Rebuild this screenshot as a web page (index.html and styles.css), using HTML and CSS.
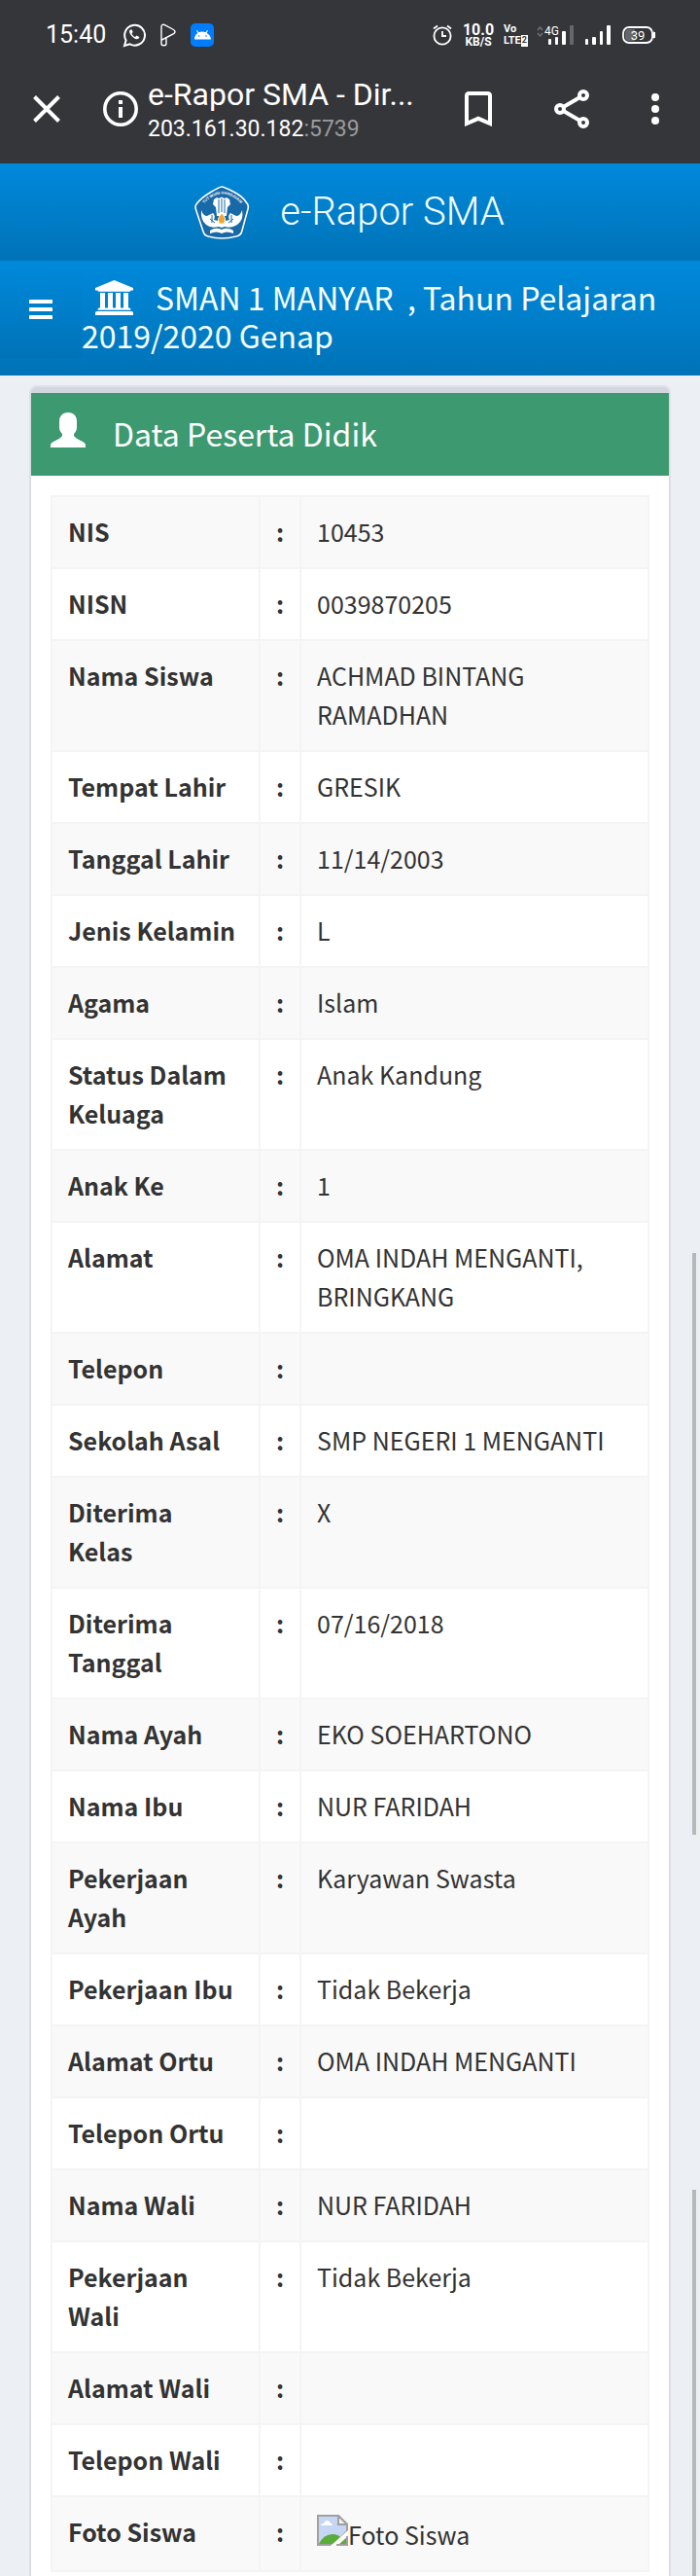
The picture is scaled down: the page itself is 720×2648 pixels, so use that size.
FILE: index.html
```html
<!DOCTYPE html>
<html lang="id">
<head>
<meta charset="utf-8">
<meta name="viewport" content="width=device-width, initial-scale=1">
<title>e-Rapor SMA - Direktorat Pembinaan SMA</title>
<link rel="stylesheet" href="styles.css">
</head>
<body>
<div class="browser">
  <div class="status">
    <span class="clock">15:40</span>
    <svg class="ic-wa" width="24" height="26" viewBox="0 0 24 26" fill="none" stroke="#fff" stroke-width="2"><path d="M2 24l1.6-5.6A10.4 10.4 0 1 1 7.600 22.300z"/><path d="M8 7.500c-1.500 1-1.200 3.200.8 5.700s4.600 4.400 6.600 3.900c1.300-.4 2-1.400 1.800-2.200l-2.600-1.300-1.500 1.400c-1.800-.8-3-2.200-3.600-3.600l1.200-1.500-1-2.500z" fill="#fff" stroke="none"/></svg>
    <svg class="ic-play" width="18" height="24" viewBox="0 0 18 24" fill="none" stroke="#fff" stroke-width="1.400"><path d="M2 17V3.500C2 1.500 3.500.8 5 1.500l9.500 5c2 1.200 2 3 .2 4.200L2 17.300V21c0 1 1 1.800 2.500 1.800S7 22 7 21v-6"/></svg>
    <svg class="ic-droid" width="24" height="24" viewBox="0 0 24 24"><rect width="24" height="24" rx="5" fill="#007dff"/><path d="M4 16.500a8 8 0 0 1 3.400-6.600L6 7.400l.8-.5 1.600 2.400a9 9 0 0 1 7.200 0l1.600-2.400.8.500-1.400 2.500a8 8 0 0 1 4.400 6.600z" fill="#fff"/><circle cx="8.600" cy="13" r=".8" fill="#007dff"/><circle cx="16" cy="13" r=".8" fill="#007dff"/></svg>
    <span class="spacer"></span>
    <svg class="ic-alarm" width="20" height="22" viewBox="0 0 20 22" fill="none" stroke="#fff" stroke-width="1.800"><circle cx="10" cy="12" r="8.600"/><path d="M10 7v5h4M1 4.500l4-3M19 4.500l-4-3"/></svg>
    <span class="speed"><b class="speed-value">10.0</b><b class="speed-unit">KB/S</b></span>
    <span class="volte"><b>Vo</b><b>LTE<i class="sim">2</i></b></span>
    <span class="signal4g"><svg width="38" height="22" viewBox="0 0 38 22"><path d="M1 6l2.500-3L6 6M1 9l2.500 3L6 9" fill="none" stroke="#77787b" stroke-width="1.200"/><g fill="#fff"><rect x="12" y="15" width="3" height="6" rx="1"/><rect x="19" y="13" width="3" height="8" rx="1"/><rect x="26" y="7" width="4" height="14" rx="1"/></g><rect x="34" y="1" width="4" height="20" rx="1" fill="#66676a"/><text x="8" y="11" class="g4">4G</text></svg></span>
    <svg class="ic-signal" width="26" height="22" viewBox="0 0 26 22" fill="#fff"><rect x="0" y="15" width="3" height="6" rx="1"/><rect x="7" y="13" width="4" height="8" rx="1"/><rect x="15" y="7" width="3" height="14" rx="1"/><rect x="22" y="1" width="4" height="20" rx="1"/></svg>
    <svg class="ic-battery" width="34" height="20" viewBox="0 0 34 20"><rect x="1" y="2" width="30" height="16" rx="6" fill="none" stroke="#fff" stroke-width="1.800"/><path d="M7 4h6v12H7a4 4 0 0 1-4-4V8a4 4 0 0 1 4-4z" fill="#66676a"/><path d="M32 7a3 3 0 0 1 0 6z" fill="#fff" stroke="#fff"/><text x="16" y="15" text-anchor="middle" class="pct">39</text></svg>
  </div>
  <div class="toolbar">
    <button class="tool" aria-label="Tutup"><svg width="28" height="28" viewBox="0 0 28 28" stroke="#fff" stroke-width="4"><path d="M1.500 1.500l25 25M26.500 1.500l-25 25"/></svg></button>
    <button class="tool info" aria-label="Info situs"><svg width="36" height="36" viewBox="0 0 36 36"><circle cx="18" cy="18" r="16.200" fill="none" stroke="#fff" stroke-width="3.600"/><path d="M16 9h4v4h-4zM16 16h4v11h-4z" fill="#fff"/></svg></button>
    <div class="address"><div class="page-title">e-Rapor SMA - Dir...</div><div class="url">203.161.30.182<span class="port">:5739</span></div></div>
    <button class="tool" aria-label="Markah"><svg width="28" height="36" viewBox="0 0 28 36" fill="none" stroke="#fff" stroke-width="4"><path d="M2 33V4.500Q2 2 4.500 2h19Q26 2 26 4.500V33l-12-5.200z"/></svg></button>
    <button class="tool share" aria-label="Bagikan"><svg width="36" height="40" viewBox="0 0 36 40" fill="none" stroke="#fff" stroke-width="4"><path d="M6 20L30 6M6 20l24 14"/><g fill="#35363a"><circle cx="6" cy="20" r="4"/><circle cx="30" cy="6" r="4"/><circle cx="30" cy="34" r="4"/></g></svg></button>
    <button class="tool more" aria-label="Menu"><svg width="8" height="32" viewBox="0 0 8 32" fill="#fff"><circle cx="4" cy="4" r="4"/><circle cx="4" cy="16" r="4"/><circle cx="4" cy="28" r="4"/></svg></button>
  </div>
</div>
<header>
  <a class="brand" href="#">
    <svg width="60" height="60" viewBox="0 -2 60 60"><path d="M30 3Q32 3 42 9T57 20Q59 22 58 27L52 48Q51 53 46 54Q30 58 15 54Q11 53 10 49L3 28Q1 23 3 21Q7 16 17 10T30 3z" fill="#0b4f86" opacity=".5"/><path d="M30 2Q32 2 42 7T56 19Q58 21 57 25L51 47Q50 52 45 53Q30 57 16 53Q12 52 11 48L4 27Q2 22 4 20Q8 14 18 8T30 2z" fill="#1769a8" stroke="#fff" stroke-width="1.600"/><path id="arc" d="M8 24Q30-5 54 24" fill="none"/><text class="motto"><textPath href="#arc" startOffset="50%" text-anchor="middle">TUT WURI HANDAYANI</textPath></text><g fill="#fff"><path d="M22 15l3-2 2 1 3-1.500 3 1.500 2-1 3 2 1 5-3 3-1 9H25l-1-9-3-3z"/><path d="M9 26q2 6 6 6l6-3q3 3 1 7l8 2 8-2q-2-4 1-7l6 3q4 0 6-6 2 10-5 15-6 4-13 2l-3 1-3-1q-8 2-13-2-6-5-5-15z"/><path d="M18 47q6-4 12-1 6-3 12 1v3q-7-3-12 0-5-3-12 0z"/></g><path d="M27 15v14M30 14v14M33 15v14M18 35l5 4M42 35l-5 4M20 31v8M40 31v8" stroke="#1769a8" stroke-width="1"/><path d="M30 29q6 6 2 11h-4q-4-4 2-11z" fill="#f5a32d" stroke="#fff" stroke-width="1"/></svg>
    <span>e-Rapor SMA</span>
  </a>
  <nav class="navbar">
    <button class="toggle" aria-label="Buka menu"><svg width="24" height="20" viewBox="0 0 24 20" fill="#fff"><rect width="24" height="4" rx=".6"/><rect y="8" width="24" height="4" rx=".6"/><rect y="16" width="24" height="4" rx=".6"/></svg></button>
    <h1 class="school"><svg class="bank" width="39" height="36" viewBox="0 0 39 36" fill="#fff"><path d="M19.500 0L39 8v2.500h-2.500q0 1.200-1.500 1.200H4q-1.500 0-1.500-1.200H0V8zM5 13h5v15.500h3V13h5v15.500h3V13h5v15.500h3V13h5v15.500h1q1.500 0 1.500 2.200h-34q0-2.200 1.500-2.200h1zM1.500 32h36q1.500 0 1.500 1.500V36H0v-2.500Q0 32 1.500 32z"/></svg>SMAN 1 MANYAR&nbsp; , Tahun Pelajaran 2019/2020 Genap</h1>
  </nav>
</header>
<main>
  <section class="card">
    <h2 class="card-head"><svg width="36" height="36" viewBox="0 0 36 36" fill="#fff"><path d="M18 0c6 0 9 4 9 9v6c0 3-1 5-3 7v2c2 3 6 4 9 6 2 1 3 2 3 4v2H0v-2c0-2 1-3 3-4 3-2 7-3 9-6v-2c-2-2-3-4-3-7V9c0-5 3-9 9-9z"/></svg>Data Peserta Didik</h2>
    <div class="card-body">
      <table class="data">
        <colgroup><col class="c-label"><col class="c-colon"><col></colgroup>
        <tbody>
          <tr><th scope="row">NIS</th><th>:</th><td>10453</td></tr>
          <tr><th scope="row">NISN</th><th>:</th><td>0039870205</td></tr>
          <tr><th scope="row">Nama Siswa</th><th>:</th><td>ACHMAD BINTANG RAMADHAN</td></tr>
          <tr><th scope="row">Tempat Lahir</th><th>:</th><td>GRESIK</td></tr>
          <tr><th scope="row">Tanggal Lahir</th><th>:</th><td>11/14/2003</td></tr>
          <tr><th scope="row">Jenis Kelamin</th><th>:</th><td>L</td></tr>
          <tr><th scope="row">Agama</th><th>:</th><td>Islam</td></tr>
          <tr><th scope="row">Status Dalam Keluaga</th><th>:</th><td>Anak Kandung</td></tr>
          <tr><th scope="row">Anak Ke</th><th>:</th><td>1</td></tr>
          <tr><th scope="row">Alamat</th><th>:</th><td>OMA INDAH MENGANTI, BRINGKANG</td></tr>
          <tr><th scope="row">Telepon</th><th>:</th><td></td></tr>
          <tr><th scope="row">Sekolah Asal</th><th>:</th><td>SMP NEGERI 1 MENGANTI</td></tr>
          <tr><th scope="row">Diterima Kelas</th><th>:</th><td>X</td></tr>
          <tr><th scope="row">Diterima Tanggal</th><th>:</th><td>07/16/2018</td></tr>
          <tr><th scope="row">Nama Ayah</th><th>:</th><td>EKO SOEHARTONO</td></tr>
          <tr><th scope="row">Nama Ibu</th><th>:</th><td>NUR FARIDAH</td></tr>
          <tr><th scope="row">Pekerjaan Ayah</th><th>:</th><td>Karyawan Swasta</td></tr>
          <tr><th scope="row">Pekerjaan Ibu</th><th>:</th><td>Tidak Bekerja</td></tr>
          <tr><th scope="row">Alamat Ortu</th><th>:</th><td>OMA INDAH MENGANTI</td></tr>
          <tr><th scope="row">Telepon Ortu</th><th>:</th><td></td></tr>
          <tr><th scope="row">Nama Wali</th><th>:</th><td>NUR FARIDAH</td></tr>
          <tr><th scope="row">Pekerjaan Wali</th><th>:</th><td>Tidak Bekerja</td></tr>
          <tr><th scope="row">Alamat Wali</th><th>:</th><td></td></tr>
          <tr><th scope="row">Telepon Wali</th><th>:</th><td></td></tr>
          <tr><th scope="row">Foto Siswa</th><th>:</th><td><div class="photo"><svg width="32" height="32" viewBox="0 0 32 32"><path d="M1 1h21l9 9v7L17 31H1z" fill="#c6d7f5" stroke="#a0a0a0" stroke-width="2"/><path d="M2 30q5-10 14-10 6 0 9 4l-8 6z" fill="#5aac3b"/><path d="M4 11q0-2 3-2 1-3 4-3 3 1 3 3 2 0 2 2z" fill="#fff"/><path d="M22 1v9h9z" fill="#f4f4f4" stroke="#a0a0a0" stroke-width="2"/><path d="M14 32L32 16v5L20 32z" fill="#fff"/><path d="M22 31h9v-8z" fill="#5aac3b"/><path d="M20 31h11v-9" fill="none" stroke="#a0a0a0" stroke-width="2"/></svg><span>Foto Siswa</span></div></td></tr>
        </tbody>
      </table>
    </div>
  </section>
</main>
<div class="thumb thumb-mid"></div>
<div class="thumb thumb-end"></div>
</body>
</html>
```

FILE: styles.css
```css
* { box-sizing: border-box; }
body {
  margin: 0;
  min-height: 100vh;
  position: relative;
  display: flex;
  flex-direction: column;
  background: #ecf0f5;
  color: #333;
  font: 25px/40px "Noto Sans CJK SC", "Open Sans", sans-serif;
}
svg { display: block; flex: none; }
button { border: 0; padding: 0; background: none; display: block; }

.browser { background: #35363a; color: #fff; font-family: Roboto, sans-serif; padding-bottom: 16px; }
.status { display: flex; align-items: center; padding: 0 46px 0 47px; height: 72px; }
.clock { font-size: 25px; line-height: 32px; }
.ic-wa { margin-left: 17px; }
.ic-play { margin-left: 14px; }
.ic-droid { margin-left: 14px; }
.spacer { flex: 1; }
.speed { display: flex; flex-direction: column; align-items: center; width: 32px; margin-left: 11px; }
.speed-value { font-size: 16px; line-height: 13px; }
.speed-unit { font-size: 12px; line-height: 12px; }
.volte { display: flex; flex-direction: column; width: 25px; margin-left: 10px; font-size: 11px; line-height: 12px; }
.volte b { display: flex; }
.sim { background: #fff; color: #35363a; font-style: normal; font-size: 9px; line-height: 10px; padding: 0 1px; }
.signal4g { margin-left: 9px; }
.g4 { font: 12px Roboto, sans-serif; fill: #fff; }
.pct { font: 13px Roboto, sans-serif; fill: #fff; }
.ic-signal { margin-left: 12px; }
.ic-battery { margin-left: 12px; }

.toolbar { display: flex; align-items: center; padding: 0 42px 0 34px; height: 80px; }
.info { margin-left: 44px; }
.address { flex: 1; margin-left: 10px; padding-top: 2px; white-space: nowrap; }
.page-title { font-size: 32px; line-height: 40px; }
.url { font-size: 23px; line-height: 32px; }
.port { color: #9a9b9d; }
.share { margin-left: 64px; }
.more { margin-left: 64px; }

.brand, .navbar, .toggle { background: linear-gradient(#0089db, #0073b7); }
.brand {
  display: flex;
  align-items: center;
  justify-content: center;
  gap: 30px;
  height: 100px;
  padding-right: 3px;
  color: #f6ffff;
  font: 300 40px/100px Roboto, sans-serif;
  text-decoration: none;
}
.motto { font: bold 4px "Liberation Sans", sans-serif; fill: #fff; }
.navbar { display: flex; align-items: flex-start; min-height: 118px; }
.toggle { flex: none; width: 84px; height: 100px; padding: 0 30px; }
.school { margin: 0; padding: 18px 30px 20px 0; color: #f6ffff; font-size: 32px; line-height: 39px; font-weight: 400; }
.bank { display: inline-block; margin: 0 23px 0 14px; vertical-align: -5px; }

main { flex: 1; display: flex; flex-direction: column; padding: 12px 32px 0; }
.card { flex: 1; background: #fff; border-top: 6px solid #d2d6de; border-radius: 6px 6px 0 0; box-shadow: 0 2px 2px rgba(0,0,0,.1), 0 0 0 2px rgba(0,0,0,.06); }
.card-head { display: flex; align-items: flex-start; gap: 28px; margin: 0; padding: 20px; min-height: 85px; background: #3d9970; color: #fff; font-size: 32px; line-height: 42px; font-weight: 400; }
.card-body { padding: 20px 20px 0; }
.data { width: 100%; table-layout: fixed; border-collapse: collapse; }
.c-label { width: 214px; }
.c-colon { width: 42px; }
.data th, .data td { height: 74px; padding: 15px 16px 17px; border: 2px solid #f4f4f4; text-align: left; vertical-align: top; }
.data th[scope="row"] { padding-right: 22px; }
.data tr:nth-child(odd) { background: #f9f9f9; }
.photo { display: flex; padding-top: 3px; }

.thumb { position: absolute; right: 4px; width: 4px; background: #b8b8b9; }
.thumb-mid { top: 1288px; height: 598px; }
.thumb-end { top: 2251px; bottom: 0; }
```
